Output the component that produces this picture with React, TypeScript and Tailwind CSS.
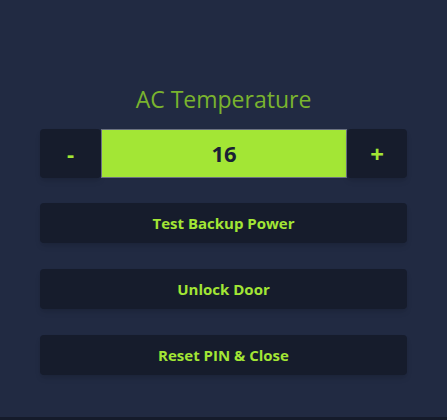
import React, { useState } from "react";

export default function App() {
  const [temp, setTemp] = useState(16);
  const font = { fontFamily: '"Open Sans", "Noto Sans", sans-serif' };
  return (
    <div className="h-[420px] w-full bg-[#151b2b]" style={font}>
      <div className="h-[417px] w-full bg-[#212a42] px-10 pt-[84px] flex flex-col">
        <h1 className="text-center text-[23px] leading-[30px] text-[#7ab32e] font-normal">
          AC Temperature
        </h1>
        <div className="mt-[15px] flex h-[49px]">
          <button
            onClick={() => setTemp(temp - 1)}
            className="w-[61px] h-full rounded bg-[#161c2c] shadow-md text-[#a3e635] font-bold text-[22px]"
          >
            -
          </button>
          <div className="flex-1 h-full bg-[#a3e635] border border-[#6b7280] flex items-center justify-center text-[22px] font-bold text-[#1a2035]">
            {temp}
          </div>
          <button
            onClick={() => setTemp(temp + 1)}
            className="w-[60px] h-full rounded bg-[#161c2c] shadow-md text-[#a3e635] font-bold text-[24px]"
          >
            +
          </button>
        </div>
        <div className="mt-[25px] flex flex-col gap-[26px]">
          {["Test Backup Power", "Unlock Door", "Reset PIN & Close"].map((t) => (
            <button
              key={t}
              className="h-[40px] w-full rounded bg-[#161c2c] shadow-md text-[#a3e635] font-bold text-[15px]"
            >
              {t}
            </button>
          ))}
        </div>
      </div>
    </div>
  );
}
